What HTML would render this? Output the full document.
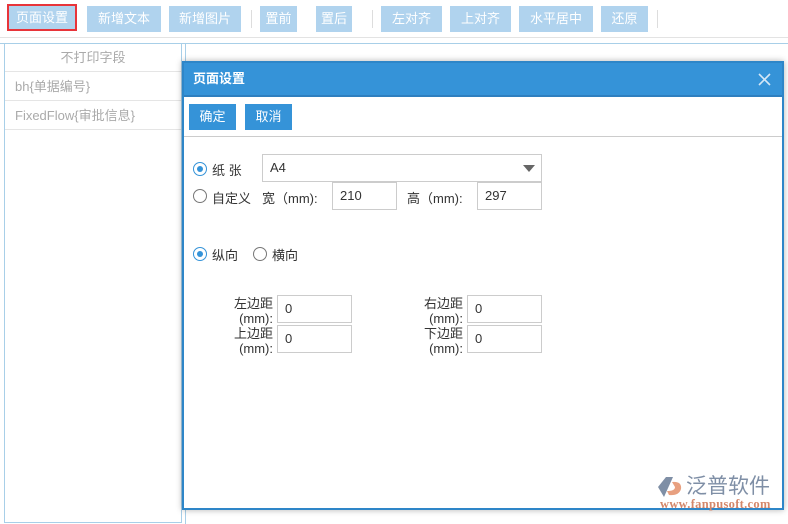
<!DOCTYPE html>
<html><head><meta charset="utf-8"><style>
*{box-sizing:border-box;margin:0;padding:0}
body{width:788px;height:520px;overflow:hidden;background:#fff;font-family:"Liberation Sans","Noto Sans CJK SC",sans-serif;font-size:13px;color:#333;position:relative}
.a{position:absolute}
.tb{background:#b0d3ee;color:#fff;top:6px;height:26px;line-height:26px;text-align:center;font-size:13px}
.sep{top:10px;width:1px;height:18px;background:#ddd}
.inp{border:1px solid #ccc;height:28px;line-height:26px;padding-left:7px;font-size:13px;color:#333;background:#fff}
.rad{width:14px;height:14px;border:1px solid #777;border-radius:50%;background:#fff}
.rad.on::after{content:"";position:absolute;left:3px;top:3px;width:6px;height:6px;border-radius:50%;background:#3593d8}
.rad.on{border-color:#3593d8}
.lbl{font-size:13px;color:#333;text-align:right;line-height:15px}
</style></head><body>
<div class="a" style="left:0;top:0;width:788px;height:38px;border-bottom:1px solid #e3e3e3"></div>
<div class="a" style="left:7px;top:4px;width:70px;height:27px;border:2px solid #e8343a"></div>
<div class="a tb" style="left:9px;width:66px;top:6px;height:23px;line-height:23px">页面设置</div>
<div class="a tb" style="left:87px;width:74px">新增文本</div>
<div class="a tb" style="left:169px;width:72px">新增图片</div>
<div class="a sep" style="left:251px"></div>
<div class="a tb" style="left:260px;width:37px">置前</div>
<div class="a tb" style="left:316px;width:36px">置后</div>
<div class="a sep" style="left:372px"></div>
<div class="a tb" style="left:381px;width:61px">左对齐</div>
<div class="a tb" style="left:450px;width:61px">上对齐</div>
<div class="a tb" style="left:519px;width:74px">水平居中</div>
<div class="a tb" style="left:601px;width:47px">还原</div>
<div class="a sep" style="left:657px"></div>
<div class="a" style="left:0;top:43px;width:788px;height:1px;background:#a8cfe8"></div>
<div class="a" style="left:4px;top:43px;width:178px;height:480px;border:1px solid #a8cfe8"></div>
<div class="a" style="left:5px;top:44px;width:176px;height:28px;line-height:28px;text-align:center;color:#aaa;border-bottom:1px solid #e5e5e5">不打印字段</div>
<div class="a" style="left:5px;top:72px;width:176px;height:29px;line-height:29px;padding-left:10px;color:#aaa;border-bottom:1px solid #e5e5e5">bh{单据编号}</div>
<div class="a" style="left:5px;top:101px;width:176px;height:29px;line-height:29px;padding-left:10px;color:#aaa;border-bottom:1px solid #e5e5e5">FixedFlow{审批信息}</div>
<div class="a" style="left:185px;top:44px;width:603px;height:480px;border-left:1px solid #a8cfe8"></div>
<div class="a" style="left:182px;top:61px;width:602px;height:449px;border:2px solid #2e86c8;background:#fff;box-shadow:0 0 6px rgba(0,0,0,.3)">
 <div class="a" style="left:0;top:0;width:598px;height:34px;background:#3593d8;color:#fff;font-weight:bold;font-size:13px;line-height:32px;padding-left:9px;border-bottom:2px solid #2e7fbf">页面设置</div>
 <svg class="a" style="left:574px;top:10px" width="13" height="13" viewBox="0 0 13 13"><path d="M1 1L12 12M12 1L1 12" stroke="#d5e7f6" stroke-width="1.6"/></svg>
 <div class="a" style="left:0;top:35px;width:598px;height:39px;border-bottom:1px solid #ccc"></div>
 <div class="a" style="left:5px;top:41px;width:47px;height:26px;background:#3593d8;color:#fff;text-align:center;line-height:26px">确定</div>
 <div class="a" style="left:61px;top:41px;width:47px;height:26px;background:#3593d8;color:#fff;text-align:center;line-height:26px">取消</div>
</div>
<div class="a rad on" style="left:193px;top:162px"></div>
<div class="a" style="left:212px;top:160px">纸 张</div>
<div class="a inp" style="left:262px;top:154px;width:280px">A4</div>
<div class="a" style="left:523px;top:165px;width:0;height:0;border-left:6px solid transparent;border-right:6px solid transparent;border-top:7px solid #666"></div>
<div class="a rad" style="left:193px;top:189px"></div>
<div class="a" style="left:212px;top:188px">自定义</div>
<div class="a" style="left:262px;top:188px">宽（mm):</div>
<div class="a inp" style="left:332px;top:182px;width:65px">210</div>
<div class="a" style="left:407px;top:188px">高（mm):</div>
<div class="a inp" style="left:477px;top:182px;width:65px">297</div>
<div class="a rad on" style="left:193px;top:247px"></div>
<div class="a" style="left:212px;top:245px">纵向</div>
<div class="a rad" style="left:253px;top:247px"></div>
<div class="a" style="left:272px;top:245px">横向</div>
<div class="a lbl" style="left:215px;top:296px;width:58px">左边距<br>(mm):</div>
<div class="a inp" style="left:277px;top:295px;width:75px">0</div>
<div class="a lbl" style="left:215px;top:326px;width:58px">上边距<br>(mm):</div>
<div class="a inp" style="left:277px;top:325px;width:75px">0</div>
<div class="a lbl" style="left:405px;top:296px;width:58px">右边距<br>(mm):</div>
<div class="a inp" style="left:467px;top:295px;width:75px">0</div>
<div class="a lbl" style="left:405px;top:326px;width:58px">下边距<br>(mm):</div>
<div class="a inp" style="left:467px;top:325px;width:75px">0</div>
<svg class="a" style="left:658px;top:476px" width="26" height="22" viewBox="0 0 26 22"><path d="M8 1 L15 1 L6 21 L0 11 Z" fill="#7f8fa6"/><path d="M14 6 Q24 5 23 13 Q21 20 11 19 L9 15 Q17 15 17 11 Z" fill="#e8a080"/></svg>
<div class="a" style="left:686px;top:475px;font-size:21px;color:#7f8fa6;line-height:24px">泛普软件</div>
<div class="a" style="left:660px;top:498px;width:118px;font-family:'Liberation Serif',serif;font-size:12.5px;font-weight:bold;color:#d4876a;line-height:12px;letter-spacing:0.3px">www.fanpusoft.com</div>
</body></html>
